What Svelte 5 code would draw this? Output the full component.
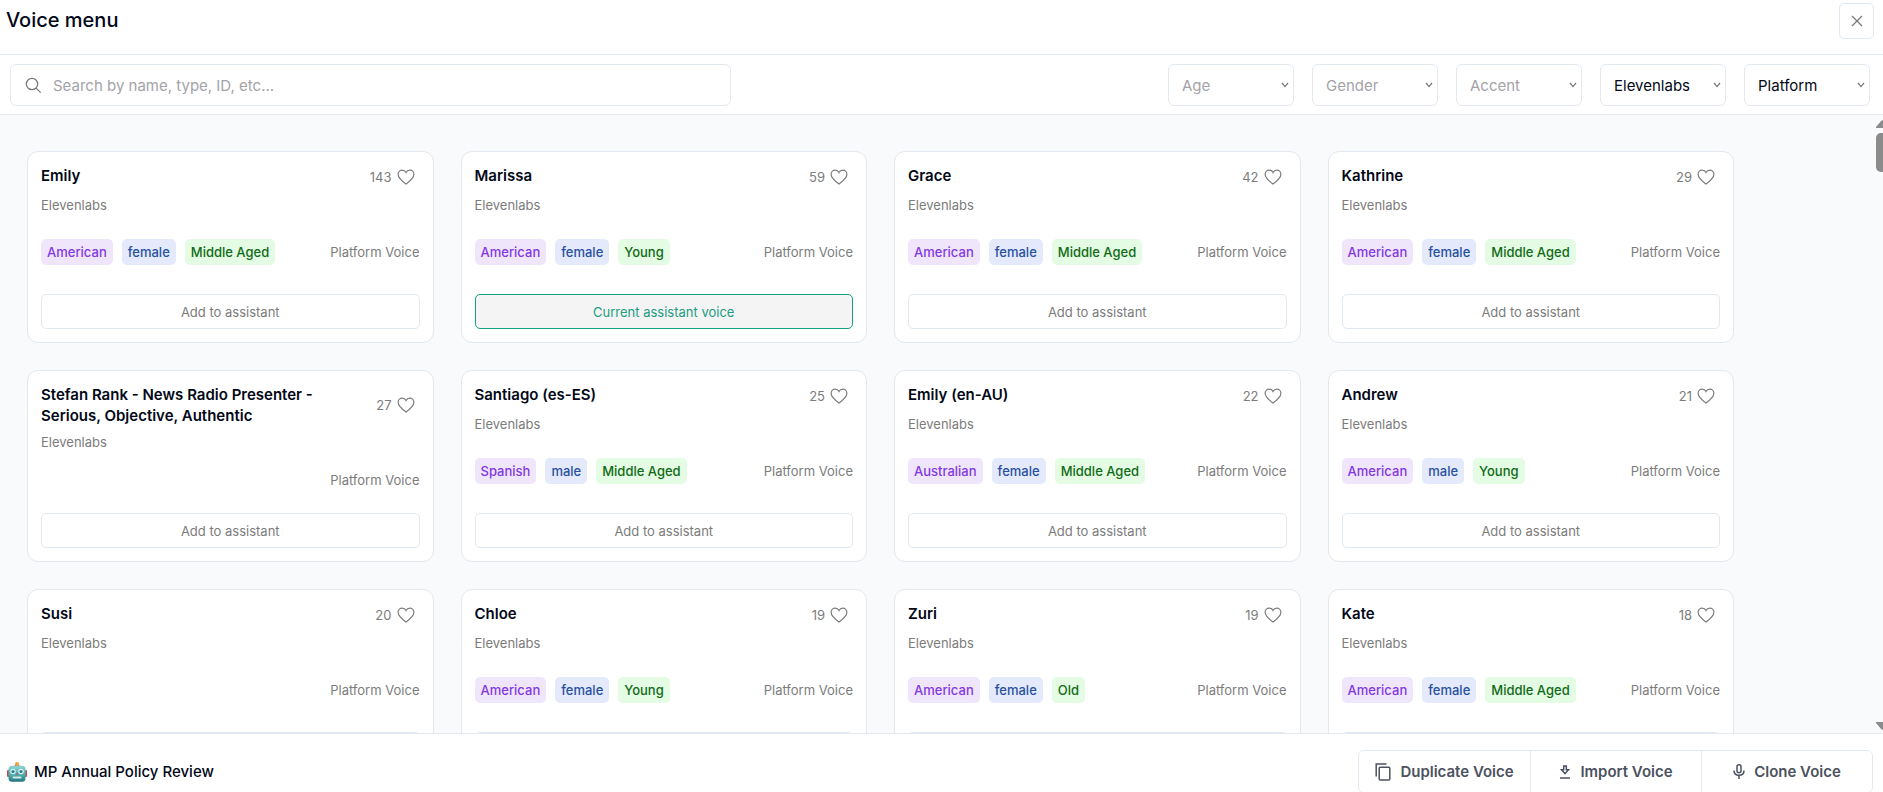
<script>
  const selects = [
    { label: 'Age', value: '', options: ['Young', 'Middle Aged', 'Old'] },
    { label: 'Gender', value: '', options: ['female', 'male'] },
    { label: 'Accent', value: '', options: ['American', 'Australian', 'Spanish'] },
    { label: 'Provider', value: 'Elevenlabs', options: ['Elevenlabs'] },
    { label: 'Source', value: 'Platform', options: ['Platform'] }
  ];

  let filters = $state(selects);
  let query = $state('');

  const voices = [
    { name: 'Emily', likes: 143, tags: ['American', 'female', 'Middle Aged'] },
    { name: 'Marissa', likes: 59, tags: ['American', 'female', 'Young'], current: true },
    { name: 'Grace', likes: 42, tags: ['American', 'female', 'Middle Aged'] },
    { name: 'Kathrine', likes: 29, tags: ['American', 'female', 'Middle Aged'] },
    { name: 'Stefan Rank - News Radio Presenter - Serious, Objective, Authentic', likes: 27, tags: [] },
    { name: 'Santiago (es-ES)', likes: 25, tags: ['Spanish', 'male', 'Middle Aged'] },
    { name: 'Emily (en-AU)', likes: 22, tags: ['Australian', 'female', 'Middle Aged'] },
    { name: 'Andrew', likes: 21, tags: ['American', 'male', 'Young'] },
    { name: 'Susi', likes: 20, tags: [] },
    { name: 'Chloe', likes: 19, tags: ['American', 'female', 'Young'] },
    { name: 'Zuri', likes: 19, tags: ['American', 'female', 'Old'] },
    { name: 'Kate', likes: 18, tags: ['American', 'female', 'Middle Aged'] }
  ];
  const kinds = ['accent', 'gender', 'age'];
</script>

<div class="page">
  <header>
    <h1>Voice menu</h1>
    <button class="close" aria-label="Close">
      <svg width="12" height="12" viewBox="0 0 12 12"><path d="M1 1l10 10M11 1L1 11" /></svg>
    </button>
  </header>

  <div class="filters">
    <label class="search">
      <svg width="17" height="17" viewBox="0 0 17 17"><circle cx="7" cy="7" r="5.7" /><path d="M11.1 11.1L15.7 15.7" /></svg>
      <input type="text" aria-label="Search voices" placeholder="Search by name, type, ID, etc..." bind:value={query} />
    </label>
    <div class="selects">
      {#each filters as f}
        <label class="select">
          <select aria-label={f.label} class:empty={!f.value} bind:value={f.value}>
            {#if f.label !== 'Provider' && f.label !== 'Source'}
              <option value="">{f.label}</option>
            {/if}
            {#each f.options as o}<option value={o}>{o}</option>{/each}
          </select>
          <svg width="8" height="6" viewBox="0 0 8 6"><path d="M1 1l3 3.600L7 1" /></svg>
        </label>
      {/each}
    </div>
  </div>

  <main>
    <div class="grid">
      {#each voices as v}
        <article class="card">
          <div class="info">
            <div class="top">
              <h2>{v.name}</h2>
              <button class="like" aria-label="Like {v.name}">
                <span>{v.likes}</span>
                <svg width="18" height="16" viewBox="0 0 18 16"><path d="M9 15.1C5.6 12.6 1.1 9.3 1.1 5.3C1.1 2.900 2.900 1.1 5.1 1.1C6.800 1.1 8.300 2 9 3.500C9.700 2 11.2 1.1 12.9 1.1C15.1 1.1 16.9 2.900 16.9 5.3C16.9 9.3 12.4 12.6 9 15.1Z" /></svg>
              </button>
            </div>
            <p>Elevenlabs</p>
          </div>
          <div class="meta">
            <div class="tags">
              {#each v.tags as t, i}<span class="tag {kinds[i]}">{t}</span>{/each}
            </div>
            <span class="source">Platform Voice</span>
          </div>
          <button class="add" class:current={v.current}>{v.current ? 'Current assistant voice' : 'Add to assistant'}</button>
        </article>
      {/each}
    </div>
    <div class="scroll" aria-hidden="true">
      <svg width="14" height="8" viewBox="0 0 14 8"><path d="M5.500 0.500H8.500L14 7V8H0V7Z" /></svg>
      <i></i>
      <svg class="down" width="14" height="8" viewBox="0 0 14 8"><path d="M5.500 7.500H8.500L14 1V0H0V1Z" /></svg>
    </div>
  </main>

  <footer>
    <div class="assistant">
      <svg width="20" height="20" viewBox="0 0 20 20">
        <defs>
          <linearGradient id="face" x1="0" y1="0" x2="0" y2="1">
            <stop offset="0" stop-color="#8fd3cf" /><stop offset="0.55" stop-color="#4fb0b0" /><stop offset="1" stop-color="#23747d" />
          </linearGradient>
        </defs>
        <rect x="0" y="8" width="3" height="7" rx="1.2" fill="#c4474d" />
        <rect x="17" y="8" width="3" height="7" rx="1.2" fill="#c4474d" />
        <path d="M7.5 4L8.3 2.5H11.7L12.5 4Z" fill="#c4474d" />
        <circle cx="10" cy="2" r="2" fill="#f3a23c" />
        <rect x="1.5" y="3.8" width="17" height="16" rx="3.5" fill="url(#face)" />
        <circle cx="6" cy="9.5" r="2.7" fill="#d9f3f6" /><circle cx="14" cy="9.5" r="2.7" fill="#d9f3f6" />
        <circle cx="6" cy="9.5" r="1.6" fill="#237f96" /><circle cx="14" cy="9.5" r="1.6" fill="#237f96" />
        <path d="M10 10.3L11.2 12.5H8.8Z" fill="#c4474d" />
        <rect x="5.5" y="14.6" width="9" height="2" rx="1" fill="#d5e8e8" />
      </svg>
      <span>MP Annual Policy Review</span>
    </div>
    <div class="actions">
      <button>
        <svg width="16" height="18" viewBox="0 0 16 18"><path d="M1.2 13.5V1H11.5" /><rect x="4.2" y="4.2" width="10.6" height="12.8" rx="1" /></svg>
        Duplicate Voice
      </button>
      <button>
        <svg width="12" height="14" viewBox="0 0 12 14"><path d="M4.7 1H7.3V4.800H9.500L6 8.700L2.500 4.800H4.7Z" /><path d="M1 13H11" /></svg>
        Import Voice
      </button>
      <button>
        <svg width="12" height="15" viewBox="0 0 12 15"><rect x="4" y="0.8" width="4" height="8" rx="2" /><path d="M1 6.500C1 9.500 3 11.300 6 11.300S11 9.500 11 6.500M6 11.300V15" /></svg>
        Clone Voice
      </button>
    </div>
  </footer>
</div>

<style>
  :global(body) { margin: 0; background: #fff; }
  .page {
    display: flex;
    flex-direction: column;
    height: 100vh;
    overflow: hidden;
    font-family: Inter, "Liberation Sans", sans-serif;
    color: #020817;
  }
  .page * { box-sizing: border-box; }
  button, input, select { font: inherit; color: inherit; }
  button { cursor: pointer; background: #fff; padding: 0; }
  svg { flex: none; fill: none; stroke: currentColor; stroke-width: 1.2; }

  header {
    display: flex;
    align-items: flex-start;
    justify-content: space-between;
    padding: 3px 9px 15px 6px;
    border-bottom: 1px solid #e2e8f0;
  }
  h1 { margin: 0; font-size: 20px; line-height: 34px; font-weight: 500; }
  .close {
    display: grid;
    place-items: center;
    width: 35px;
    height: 36px;
    border: 1px solid #e2e8f0;
    border-radius: 5px;
    color: #777;
  }

  .filters {
    display: flex;
    align-items: center;
    justify-content: space-between;
    gap: 18px;
    padding: 9px 13px 8px 10px;
    border-bottom: 1px solid #e2e8f0;
    font-size: 15px;
  }
  .search {
    display: flex;
    align-items: center;
    flex: 0 1 721px;
    gap: 11px;
    height: 42px;
    padding: 0 14px;
    border: 1px solid #e2e8f0;
    border-radius: 6px;
    color: #777;
  }
  .search input { flex: 1; min-width: 0; border: 0; outline: 0; padding: 0; background: none; color: #020817; }
  .search input::placeholder { color: #a3a3a8; opacity: 1; }
  .selects { display: flex; gap: 18px; }
  .select { position: relative; width: 126px; }
  select {
    display: block;
    width: 100%;
    height: 42px;
    padding: 0 20px 0 13px;
    appearance: none;
    background: #fff;
    border: 1px solid #e2e8f0;
    border-radius: 6px;
  }
  select.empty { color: #a3a3a8; }
  .select svg { position: absolute; right: 5px; top: 18px; color: #777; pointer-events: none; }

  main { position: relative; flex: 1; min-height: 0; overflow: hidden; background: #f9fafc; padding: 36px 149px 0 27px; }
  .grid { display: grid; grid-template-columns: repeat(4, minmax(0, 1fr)); gap: 27px; }
  .card {
    display: flex;
    flex-direction: column;
    justify-content: space-between;
    min-height: 192px;
    padding: 13px;
    background: #fff;
    border: 1px solid #e2e8f0;
    border-radius: 11px;
    font-size: 13px;
    line-height: 20px;
    color: #7c7c7c;
  }
  .info { display: flex; flex-direction: column; gap: 6px; }
  .info p { margin: 0; }
  .top { display: flex; align-items: center; justify-content: space-between; min-height: 24px; }
  h2 { align-self: flex-start; margin: 0; max-width: 290px; font-size: 15px; line-height: 21px; font-weight: 600; color: #020817; }
  .like { display: flex; align-items: center; gap: 5px; margin-right: 5px; border: 0; }
  .meta { display: flex; align-items: center; justify-content: space-between; margin-bottom: 6px; }
  .tags { display: flex; gap: 9px; }
  .tag { padding: 3px 6px; border-radius: 5px; font-weight: 500; }
  .accent { background: #f0e6fc; color: #8338e0; }
  .gender { background: #e4eafb; color: #2850a0; }
  .age { background: #e4fbe4; color: #116b16; }
  .add { height: 35px; border: 1px solid #e2e8f0; border-radius: 5px; }
  .add.current { border-color: #12a183; background: #f4f4f4; color: #229c82; }

  .scroll {
    position: absolute;
    top: 5px;
    right: -7px;
    bottom: 3px;
    width: 14px;
    display: flex;
    flex-direction: column;
    color: #8b8b8b;
  }
  .scroll svg { fill: currentColor; stroke: none; }
  .scroll i { height: 39px; margin-top: 5px; border-radius: 5px; background: currentColor; }
  .scroll .down { margin-top: auto; }

  footer {
    display: flex;
    align-items: center;
    justify-content: space-between;
    padding: 16px 10px 0 7px;
    margin-bottom: -1px;
    border-top: 1px solid #e2e8f0;
    font-size: 15px;
    font-weight: 500;
  }
  .assistant { display: flex; align-items: center; gap: 7px; }
  .assistant svg { stroke: none; }
  .actions { display: grid; grid-template-columns: repeat(3, 171px); border: 1px solid #e2e8f0; border-radius: 6px; overflow: hidden; font-weight: 600; }
  .actions button {
    display: flex;
    align-items: center;
    justify-content: center;
    gap: 9px;
    height: 41px;
    border: 0;
    color: #4b5260;
    white-space: nowrap;
  }
  .actions button + button { border-left: 1px solid #e2e8f0; }
  .actions svg { stroke-width: 1.5; }
</style>
